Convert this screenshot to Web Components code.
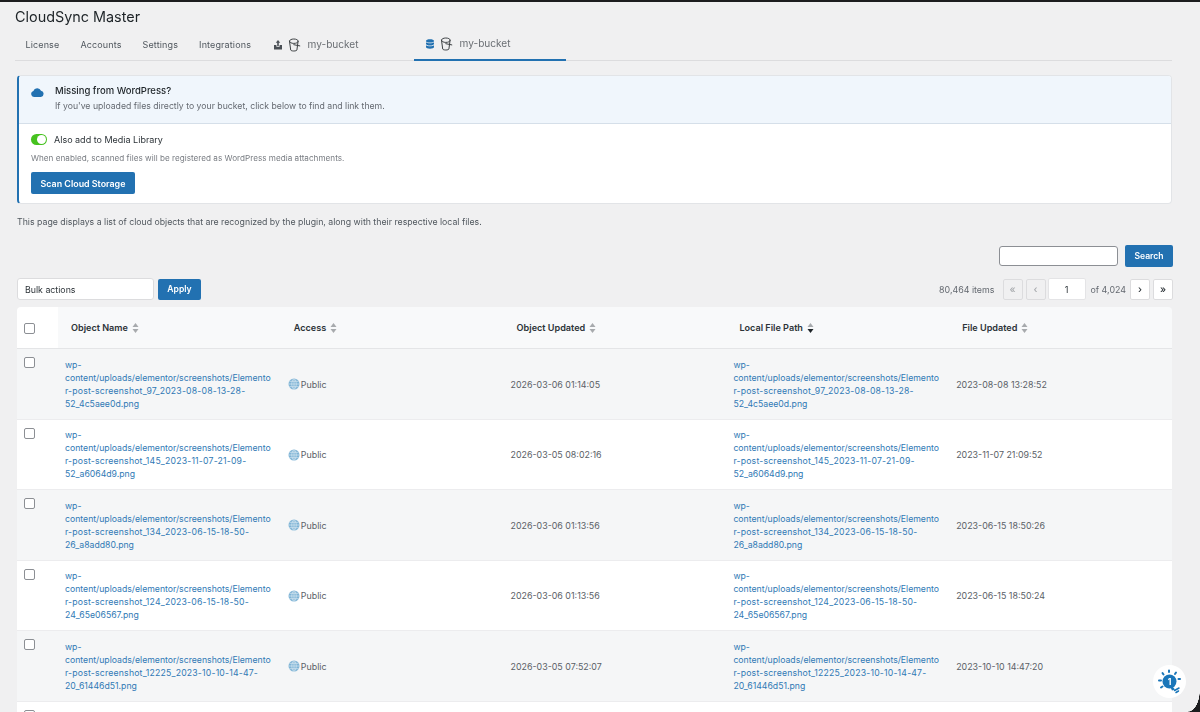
<!doctype html>
<html>
<head>
<meta charset="utf-8">
<title>CloudSync Master</title>
<style>
    html, body { margin: 0; height: 100%; overflow: hidden; background: #f0f0f1; }
    body { font-family: Inter, "Liberation Sans", sans-serif; color: #2c3338; }
</style>
</head>
<body>
<cs-app>
    <cs-tabs title="CloudSync Master"></cs-tabs>
    <cs-notice></cs-notice>
    <cs-intro>This page displays a list of cloud objects that are recognized by the plugin, along with their respective local files.</cs-intro>
    <cs-search></cs-search>
    <cs-toolbar></cs-toolbar>
    <cs-table></cs-table>
</cs-app>
<cs-help></cs-help>
<cs-frame></cs-frame>

<script>
const bucketIcon = `<svg width="13" height="14" viewBox="0 0 13 14" fill="none" stroke="#3c4043" stroke-width="1" stroke-linecap="round" stroke-linejoin="round"><path d="M1.500 3.200C1.500 1.900 3.400 1 5.800 1s4.300.9 4.300 2.200S8.200 5.400 5.800 5.400 1.500 4.500 1.500 3.200z"/><path d="M1.500 3.200 2.700 12c.1.600 1.500 1 3.100 1s3-.400 3.100-1l1.200-8.800"/><path d="M5.800 6.700l6 1.200"/></svg>`
const uploadIcon = `<svg width="8" height="10" viewBox="0 0 9 11" fill="#4a4f55"><path d="M4.500 0 7 3H5.400v3.500H3.600V3H2z"/><path d="M0 5.500h2.700v1.900h3.600V5.500H9V10.500H0z"/></svg>`
const dbIcon = `<svg width="8" height="10" viewBox="0 0 9 11" fill="#2271b1"><path d="M0 2C0 .9 2 .2 4.500.2S9 .9 9 2s-2 1.800-4.500 1.800S0 3.100 0 2z"/><path d="M0 3.500C1 4.400 2.700 4.700 4.500 4.700S8 4.400 9 3.500V5.400c0 1-2 1.700-4.500 1.700S0 6.400 0 5.400z"/><path d="M0 7C1 7.800 2.700 8.100 4.500 8.100S8 7.800 9 7v2c0 1-2 1.800-4.500 1.800S0 10 0 9z"/></svg>`
const globeIcon = `<svg width="12" height="12" viewBox="0 0 12 12" fill="none"><circle cx="6" cy="6" r="5.500" fill="#7fb4d6"/><path d="M6 .5v11M.5 6h11M1.300 3.300h9.400M1.300 8.700h9.400M6 .5C3 3 3 9 6 11.500M6 .5C9 3 9 9 6 11.500" stroke="#d5e6f1" stroke-width=".7"/></svg>`
const sortIcon = (active) => `<svg width="7" height="12" viewBox="0 0 7 12"><path d="M3.500 1 6.500 5H.5z" fill="#a7aaad"/><path d="M3.500 11 .5 7h6z" fill="${active ? '#1d2327' : '#a7aaad'}"/></svg>`

class CsApp extends HTMLElement {
    constructor () {
        super()
        this.attachShadow({mode: 'open'}).innerHTML = `<style>
            :host { display: flex; flex-direction: column; padding: 2px 28px 0 17px; filter: blur(.35px); }
        </style><slot></slot>`
    }
}

class CsTabs extends HTMLElement {
    constructor () {
        super()
        this.attachShadow({mode: 'open'})
    }
    connectedCallback () {
        this.shadowRoot.innerHTML = `<style>
            :host { display: block; margin-left: -2px; }
            h1 { margin: 0; font: 400 14.400px/18px Inter, "Liberation Sans", sans-serif; color: #1d2327; padding-top: 6px; height: 19px; }
            nav { display: flex; height: 33px; border-bottom: 1px solid #dcdcde; }
            a { display: flex; align-items: center; padding: 0 10.500px 0; height: 33px; margin-top: 1px; box-sizing: border-box; font-size: 9px; color: #50575e; letter-spacing: .13px; }
            a.bucket { width: 152px; padding: 0 12px; gap: 6.500px; font-size: 10.100px; color: #6b6f74; letter-spacing: 0; }
            a.bucket span { margin-top: -2px; }
            a.active { border-bottom: 2px solid #2271b1; height: 33px; }
        </style>
        <h1>${this.getAttribute('title')}</h1>
        <nav>
            <a>License</a><a>Accounts</a><a>Settings</a><a>Integrations</a>
            <a class="bucket">${uploadIcon}${bucketIcon}<span>my-bucket</span></a>
            <a class="bucket active">${dbIcon}${bucketIcon}<span>my-bucket</span></a>
        </nav>`
    }
}

class CsNotice extends HTMLElement {
    constructor () {
        super()
        this.attachShadow({mode: 'open'}).innerHTML = `<style>
            :host { display: block; margin-top: 14px; height: 129px; box-sizing: border-box; background: #fff; border: 1px solid #e2e4e7; border-left: 2px solid #2271b1; border-radius: 4px; overflow: hidden; font-size: 9px; }
            header { display: flex; align-items: flex-start; gap: 11px; height: 48px; box-sizing: border-box; padding: 9px 12px 0; background: #f0f6fc; border-bottom: 1px solid #d5dfe9; }
            header svg { margin-top: 2px; }
            strong { display: block; font-weight: 500; font-size: 9.500px; line-height: 12px; color: #1d2327; margin-bottom: 4px; }
            header p { margin: 0; color: #646970; font-size: 8.700px; line-height: 11px; }
            section { padding: 10px 12px; }
            .toggle { display: flex; align-items: center; gap: 7px; font-size: 9px; color: #2c3338; }
            .switch { width: 16px; height: 11px; border-radius: 6px; background: #46c21f; position: relative; }
            .switch::after { content: ''; position: absolute; right: 1px; top: 1px; width: 9px; height: 9px; border-radius: 50%; background: #fff; }
            small { display: block; font-size: 8.150px; color: #787c82; margin: 8px 0 9px; line-height: 10px; letter-spacing: .02px; }
            button { font: 600 8.900px Inter, sans-serif; color: #fff; background: #2271b1; border: 0; border-radius: 2px; width: 104px; height: 22px; padding: 0; }
        </style>
        <header>
            <svg width="13" height="10" viewBox="0 0 13 10" fill="#2271b1"><path d="M3 10a3 3 0 0 1-.6-5.900A4 4 0 0 1 10 3.700 3.200 3.200 0 0 1 10 10z"/></svg>
            <div><strong>Missing from WordPress?</strong><p>If you've uploaded files directly to your bucket, click below to find and link them.</p></div>
        </header>
        <section>
            <div class="toggle"><span class="switch"></span>Also add to Media Library</div>
            <small>When enabled, scanned files will be registered as WordPress media attachments.</small>
            <button>Scan Cloud Storage</button>
        </section>`
    }
}

class CsIntro extends HTMLElement {
    constructor () {
        super()
        this.attachShadow({mode: 'open'}).innerHTML = `<style>
            :host { display: block; margin-top: 13px; font-size: 8.750px; line-height: 11px; color: #50575e; }
        </style><slot></slot>`
    }
}

class CsSearch extends HTMLElement {
    constructor () {
        super()
        this.attachShadow({mode: 'open'}).innerHTML = `<style>
            :host { display: flex; justify-content: flex-end; align-items: center; gap: 7px; margin-top: 17px; margin-right: -1px; }
            input { width: 119px; height: 20px; box-sizing: border-box; border: 1px solid #8c8f94; border-radius: 3px; background: #fff; padding: 0; }
            button { font: 600 8.600px Inter, sans-serif; color: #fff; background: #2271b1; border: 0; border-radius: 2px; width: 48px; height: 22px; padding: 0; }
        </style><input type="text"><button>Search</button>`
    }
}

class CsToolbar extends HTMLElement {
    constructor () {
        super()
        this.attachShadow({mode: 'open'}).innerHTML = `<style>
            :host { display: flex; align-items: center; height: 22px; margin-top: 11px; font-size: 8.900px; color: #646970; margin-right: -1px; }
            .bulk { width: 137px; height: 22px; box-sizing: border-box; border: 1px solid #dcdcde; border-radius: 3px; background: #fff; color: #2c3338; font-size: 8.800px; display: flex; align-items: center; padding-left: 7px; }
            .apply { font: 600 8.600px Inter, sans-serif; color: #fff; background: #2271b1; border: 0; border-radius: 2px; width: 43px; height: 21px; padding: 0; margin-left: 4px; }
            .pager { margin-left: auto; display: flex; align-items: center; gap: 3px; }
            .count { margin-right: 5px; }
            .of { margin: 0 1px 0 2px; }
            b { display: flex; align-items: center; justify-content: center; width: 20px; height: 21px; box-sizing: border-box; border: 1px solid #dcdcde; border-radius: 2px; background: #fff; font-weight: 500; font-size: 10px; color: #2c3338; }
            b.off { background: #f0f0f1; color: #a7aaad; }
            .page { width: 38px; height: 22px; font-size: 9px; font-weight: 400; border-color: #e4e4e6; margin-left: -1px; }
        </style>
        <div class="bulk">Bulk actions</div>
        <button class="apply">Apply</button>
        <div class="pager">
            <span class="count">80,464 items</span>
            <b class="off">«</b><b class="off">‹</b><b class="page">1</b>
            <span class="of">of 4,024</span>
            <b>›</b><b>»</b>
        </div>`
    }
}

const columns = ['Object Name', 'Access', 'Object Updated', 'Local File Path', 'File Updated']
const rows = [
    ['97_2023-08-08-13-28-', '52_4c5aee0d.png', '2026-03-06 01:14:05', '2023-08-08 13:28:52'],
    ['145_2023-11-07-21-09-', '52_a6064d9.png', '2026-03-05 08:02:16', '2023-11-07 21:09:52'],
    ['134_2023-06-15-18-50-', '26_a8add80.png', '2026-03-06 01:13:56', '2023-06-15 18:50:26'],
    ['124_2023-06-15-18-50-', '24_65e06567.png', '2026-03-06 01:13:56', '2023-06-15 18:50:24'],
    ['12225_2023-10-10-14-47-', '20_61446d51.png', '2026-03-05 07:52:07', '2023-10-10 14:47:20'],
]

class CsTable extends HTMLElement {
    constructor () {
        super()
        this.attachShadow({mode: 'open'})
    }
    connectedCallback () {
        const path = (r) => `<a>wp-<br>content/uploads/elementor/screenshots/Elemento<br><span class="wide">r-post-screenshot_${r[0]}</span><br>${r[1]}</a>`
        this.shadowRoot.innerHTML = `<style>
            :host { display: block; margin-top: 7px; border-radius: 4px 4px 0 0; overflow: hidden; font-size: 8.900px; color: #5a6066; }
            .row { display: grid; grid-template-columns: 41px repeat(5, 1fr); height: 70.500px; align-items: center; }
            .head { height: 42px; background: #f8f9fa; border-bottom: 1px solid #e4e5e7; box-sizing: border-box; font-weight: 600; font-size: 9.100px; color: #2c3338; }
            .head > div:first-child { background: #fff; height: 100%; }
            .head span { display: flex; align-items: center; gap: 4px; padding-left: 13px; }
            .head .cb { margin-top: 16px; }
            .odd { background: #f5f6f7; }
            .even { background: #fff; }
            .body { box-shadow: inset 0 -1px 0 #ececee; }
            .cell { padding-left: 7px; }
            a { display: block; color: #3079b5; font-size: 8.700px; line-height: 13px; white-space: nowrap; margin-top: 1px; }
            .wide { letter-spacing: .19px; }
            .access { display: flex; align-items: center; gap: 1px; }
            .box { display: flex; align-items: flex-start; height: 100%; }
            .cb { width: 11px; height: 11px; box-sizing: border-box; border: 1px solid #8c8f94; border-radius: 2px; background: #fff; margin: 8px 0 0 7px; }
        </style>
        <div class="row head">
            <div class="box"><div class="cb"></div></div>
            ${columns.map((c) => `<span>${c}${sortIcon(c === 'Local File Path')}</span>`).join('')}
        </div>
        ${rows.map((r, i) => `<div class="row body ${i % 2 ? 'even' : 'odd'}">
            <div class="box"><div class="cb"></div></div>
            <div class="cell">${path(r)}</div>
            <div class="cell access">${globeIcon}<span>Public</span></div>
            <div class="cell">${r[2]}</div>
            <div class="cell">${path(r)}</div>
            <div class="cell">${r[3]}</div>
        </div>`).join('')}
        <div class="row body even"><div class="box"><div class="cb"></div></div></div>`
    }
}

class CsHelp extends HTMLElement {
    constructor () {
        super()
        this.attachShadow({mode: 'open'}).innerHTML = `<style>
            :host { position: fixed; left: 1153px; top: 665px; width: 33px; height: 33px; border-radius: 50%; background: #fff; display: flex; align-items: center; justify-content: center; }
            text { font: 700 8.500px Inter, sans-serif; fill: #fff; }
        </style>
        <svg width="25" height="25" viewBox="0 0 25 25">
            <g stroke="#1a76b9" stroke-width="2" stroke-linecap="round">
                <path d="M12 1.500v1.500M5.500 4l1 1.500M19 3.500 18 5M2 11.500h2M23 10h-1.500M4 18.500l1.500-1"/>
                <path d="M17.500 21.500 22 19M19 23.500l2.500-1.500" stroke-width="1.500"/>
            </g>
            <circle cx="12.500" cy="12.500" r="7" fill="#1a76b9"/>
            <path d="M15.500 17.500l2.500 3-3 1-1.500-3z" fill="#1a76b9"/>
            <text x="12.500" y="15.600" text-anchor="middle">1</text>
        </svg>`
    }
}

class CsFrame extends HTMLElement {
    constructor () {
        super()
        this.attachShadow({mode: 'open'}).innerHTML = `<style>
            :host { position: fixed; inset: 0; pointer-events: none; display: block; }
            .top { height: 2px; background: #1c1d1f; }
            .corner { position: absolute; right: 0; bottom: 0; width: 12px; height: 22px; background: radial-gradient(ellipse 12px 22px at 0 0, transparent 97%, #1c1d1f 100%); }
        </style><div class="top"></div><div class="corner"></div>`
    }
}

customElements.define('cs-app', CsApp)
customElements.define('cs-tabs', CsTabs)
customElements.define('cs-notice', CsNotice)
customElements.define('cs-intro', CsIntro)
customElements.define('cs-search', CsSearch)
customElements.define('cs-toolbar', CsToolbar)
customElements.define('cs-table', CsTable)
customElements.define('cs-help', CsHelp)
customElements.define('cs-frame', CsFrame)
</script>
</body>
</html>
